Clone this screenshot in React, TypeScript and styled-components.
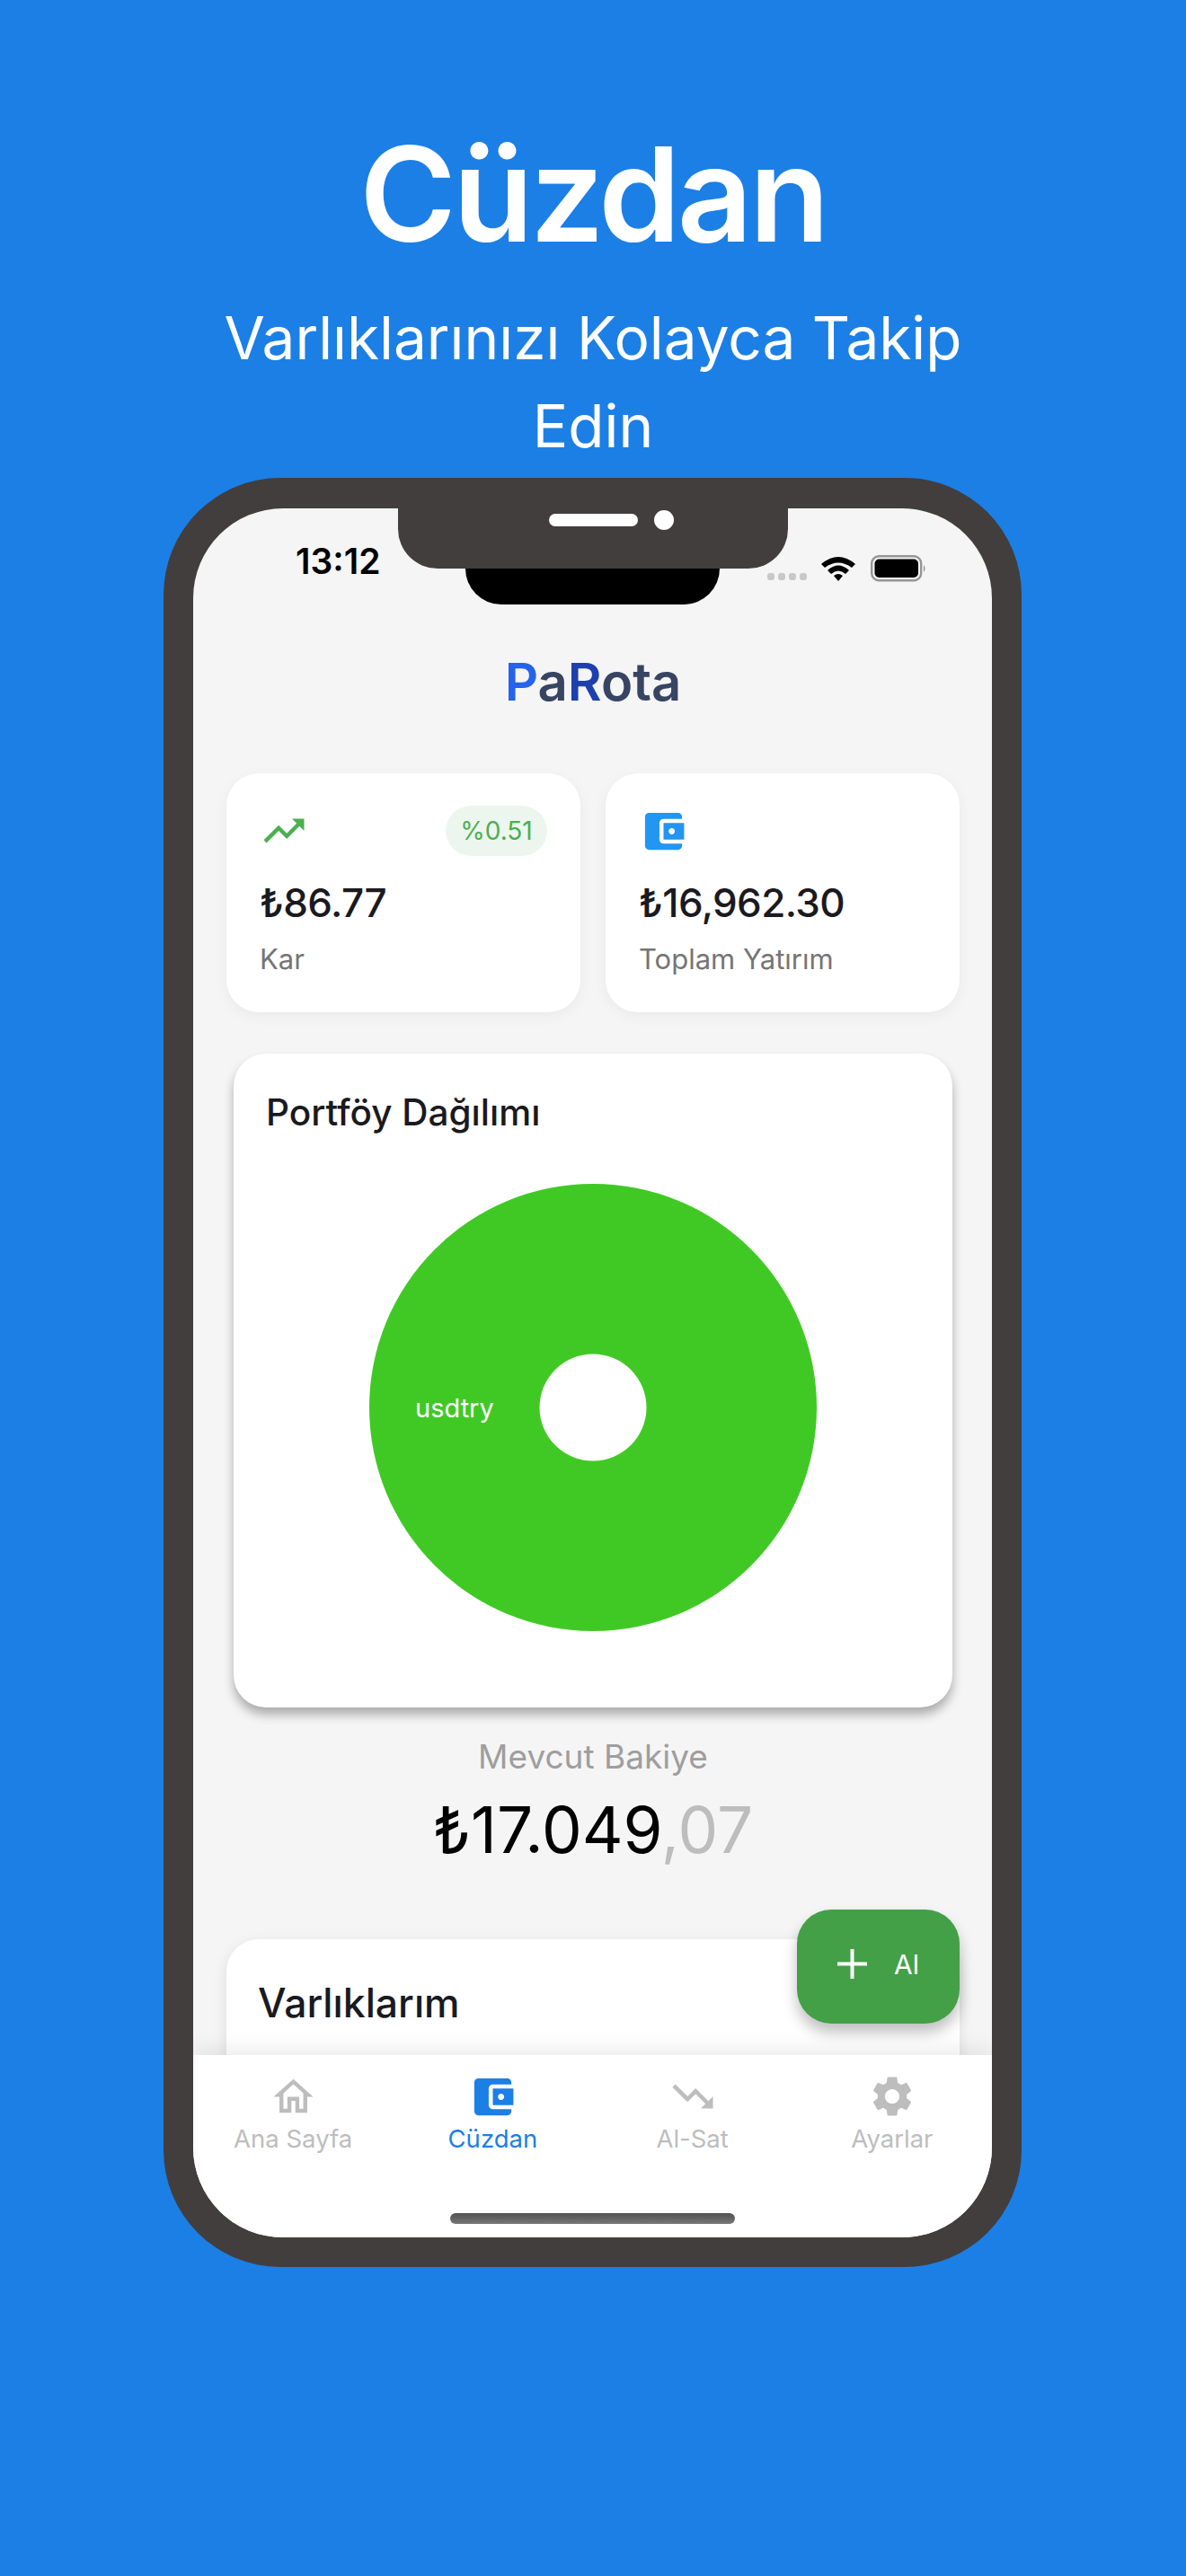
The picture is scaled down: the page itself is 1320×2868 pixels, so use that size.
import React from "react";
import styled, { createGlobalStyle } from "styled-components";
import {
  MdAccountBalanceWallet,
  MdOutlineHome,
  MdSettings,
  MdTrendingDown,
  MdTrendingUp,
} from "react-icons/md";

const GlobalStyle = createGlobalStyle`
  html, body {
    margin: 0;
    padding: 0;
    background: #1c7fe6;
  }
  * {
    box-sizing: border-box;
  }
`;

const Page = styled.div`
  width: 1320px;
  height: 2868px;
  overflow: hidden;
  background: #1c7fe6;
  color: #fff;
  font-family: Inter, "Noto Sans", sans-serif;
  display: flex;
  flex-direction: column;
  align-items: center;
  padding-top: 131px;
`;

const Headline = styled.h1`
  margin: 0;
  font-size: 146px;
  line-height: 170px;
  font-weight: 600;
  letter-spacing: -3.6px;
`;

const Tagline = styled.p`
  margin: 26px 0 0;
  width: 860px;
  text-align: center;
  font-size: 65.7px;
  line-height: 98px;
  font-weight: 400;
`;

const Phone = styled.div`
  position: relative;
  margin: 9px 1px 0 0;
  width: 955px;
  height: 1992px;
  padding: 34px 33px 33px;
  background: #423e3d;
  border-radius: 130px;
`;

const Screen = styled.div`
  height: 100%;
  background: #f5f5f5;
  border-radius: 100px;
  overflow: hidden;
  display: flex;
  flex-direction: column;
`;

const Notch = styled.div`
  position: absolute;
  left: 261px;
  top: 0;
  width: 434px;
  height: 101px;
  background: #423e3d;
  border-radius: 0 0 44px 44px;
  display: flex;
  justify-content: center;
  align-items: center;
  gap: 18px;
  padding: 0 0 8px 40px;
  z-index: 3;
`;

const NotchShade = styled.div`
  position: absolute;
  left: 336px;
  top: 90px;
  width: 283px;
  height: 51px;
  background: #000;
  border-radius: 0 0 40px 40px;
  z-index: 2;
`;

const Speaker = styled.span`
  width: 99px;
  height: 14px;
  border-radius: 7px;
  background: #fff;
`;

const Camera = styled.span`
  width: 22px;
  height: 22px;
  border-radius: 50%;
  background: #fff;
`;

const StatusBar = styled.div`
  height: 91px;
  flex: none;
  display: flex;
  align-items: flex-end;
  justify-content: space-between;
  padding: 0 73px 9px 114px;
`;

const Clock = styled.span`
  color: #000;
  font-size: 39px;
  line-height: 46px;
  font-weight: 600;
`;

const StatusIcons = styled.div`
  display: flex;
  align-items: center;
`;

const SignalDots = styled.div`
  display: flex;
  gap: 4px;
  margin: 17px 16px 0 0;
`;

const SignalDot = styled.span`
  width: 8px;
  height: 8px;
  border-radius: 3px;
  background: #c8c8c8;
`;

const Content = styled.div`
  flex: 1;
  min-height: 0;
  padding: 0 36px 0 37px;
`;

const Logo = styled.div`
  margin-top: 68px;
  text-align: center;
  font-size: 58px;
  line-height: 68px;
  font-weight: 600;
  color: #374462;
`;

const LogoLetter = styled.span<{ $color: string }>`
  color: ${(p) => p.$color};
`;

const StatGrid = styled.div`
  margin-top: 68px;
  display: grid;
  grid-template-columns: 394px 394px;
  column-gap: 28px;
`;

const StatCard = styled.div`
  height: 266px;
  padding: 36px 37px;
  background: #fff;
  border-radius: 36px;
  box-shadow: 0 4px 16px rgba(0, 0, 0, 0.05);
`;

const StatTop = styled.div`
  height: 56px;
  display: flex;
  align-items: center;
  justify-content: space-between;
`;

const Badge = styled.span`
  width: 113px;
  height: 56px;
  border-radius: 28px;
  background: #edf6ee;
  color: #4caf50;
  font-size: 28px;
  display: flex;
  align-items: center;
  justify-content: center;
`;

const StatValue = styled.div`
  margin-top: 24px;
  color: #1a1a1f;
  font-size: 44px;
  line-height: 56px;
  font-weight: 500;
  letter-spacing: -0.6px;
`;

const StatLabel = styled.div`
  margin-top: 16px;
  color: #757575;
  font-size: 31px;
  line-height: 38px;
`;

const PortfolioCard = styled.div`
  margin: 46px 8px 0 8px;
  height: 728px;
  padding: 41px 36px 0;
  background: #fff;
  border-radius: 36px;
  box-shadow: 0 8px 12px rgba(0, 0, 0, 0.3);
`;

const PortfolioTitle = styled.h2`
  margin: 0;
  color: #1a1a1f;
  font-size: 40.5px;
  line-height: 50px;
  font-weight: 500;
`;

const Chart = styled.div`
  margin-top: 54px;
  display: flex;
  justify-content: center;
`;

const Balance = styled.div`
  margin-top: 32px;
  text-align: center;
`;

const BalanceLabel = styled.div`
  color: #9e9e9e;
  font-size: 37px;
  line-height: 46px;
`;

const BalanceAmount = styled.div`
  margin-top: 15px;
  color: #000;
  font-size: 71px;
  line-height: 86px;
`;

const BalanceCents = styled.span`
  color: #bdbdbd;
`;

const AssetsCard = styled.div`
  margin-top: 79px;
  height: 240px;
  padding: 44px 35px;
  background: #fff;
  border-radius: 36px;
  box-shadow: 0 4px 16px rgba(0, 0, 0, 0.1);
`;

const AssetsTitle = styled.h2`
  margin: 0;
  color: #1a1a1f;
  font-size: 44.5px;
  line-height: 54px;
  font-weight: 500;
`;

const BuyButton = styled.div`
  position: absolute;
  left: 705px;
  top: 1594px;
  width: 181px;
  height: 127px;
  border-radius: 38px;
  background: #43a047;
  box-shadow: 0 10px 16px rgba(0, 0, 0, 0.25);
  display: flex;
  align-items: center;
  justify-content: center;
  gap: 30px;
  color: #fff;
  font-size: 30px;
  padding-bottom: 6px;
`;

const PlusMark = styled.svg`
  width: 33px;
  height: 33px;
`;

const TabBar = styled.nav`
  height: 203px;
  flex: none;
  position: relative;
  background: #fff;
  box-shadow: 0 -8px 20px rgba(0, 0, 0, 0.07);
  display: flex;
  flex-direction: column;
`;

const Tabs = styled.div`
  display: grid;
  grid-template-columns: repeat(4, 1fr);
  padding-top: 19px;
`;

const Tab = styled.div<{ $active?: boolean }>`
  display: flex;
  flex-direction: column;
  align-items: center;
  color: ${(p) => (p.$active ? "#1c7fe6" : "#bdbdbd")};
  font-size: 27.5px;
  line-height: 34px;
`;

const TabIcon = styled.span`
  height: 54px;
  display: flex;
  align-items: center;
  justify-content: center;
  margin-bottom: 3px;
`;

const HomeIndicator = styled.div`
  margin: 66px auto 0;
  width: 317px;
  height: 12px;
  border-radius: 6px;
  background: linear-gradient(#505050, #777);
`;

const WifiIcon = () => (
  <svg width="38" height="28" viewBox="0 0 38 28">
    <path d="M0 9 Q19 -7 38 9 L34 13 Q19 2 4 13Z" fill="#000" />
    <path d="M7 16 Q19 5 31 16 L27 20 Q19 13 11 20Z" fill="#000" />
    <path d="M14 22 Q19 18 24 22 L19 28Z" fill="#000" />
  </svg>
);

const BatteryIcon = () => (
  <svg width="62" height="30" viewBox="0 0 62 30" style={{ marginLeft: 17 }}>
    <rect x="1.2" y="1.2" width="55" height="27" rx="8" fill="none" stroke="#969696" strokeWidth="2.4" />
    <rect x="4.5" y="4.5" width="48.5" height="20.5" rx="5" fill="#000" />
    <path d="M59 11 Q62 15 59 19Z" fill="#8c8c8c" />
  </svg>
);

const PieChart = () => (
  <svg width="498" height="498" viewBox="0 0 498 498">
    <circle cx="249" cy="249" r="249" fill="#40c925" />
    <circle cx="249" cy="249" r="59.5" fill="#fff" />
    <text x="51" y="260" fill="#fff" fontFamily="Inter, sans-serif" fontSize="29">
      usdtry
    </text>
  </svg>
);

const TABS = [
  { label: "Ana Sayfa", icon: <MdOutlineHome size={53} /> },
  { label: "Cüzdan", icon: <MdAccountBalanceWallet size={55} />, active: true },
  { label: "Al-Sat", icon: <MdTrendingDown size={54} /> },
  { label: "Ayarlar", icon: <MdSettings size={54} /> },
];

const App = () => (
  <Page>
    <GlobalStyle />
    <Headline>Cüzdan</Headline>
    <Tagline>Varlıklarınızı Kolayca Takip Edin</Tagline>
    <Phone>
      <Notch>
        <Speaker />
        <Camera />
      </Notch>
      <NotchShade />
      <Screen>
        <StatusBar>
          <Clock>13:12</Clock>
          <StatusIcons>
            <SignalDots>
              <SignalDot />
              <SignalDot />
              <SignalDot />
              <SignalDot />
            </SignalDots>
            <WifiIcon />
            <BatteryIcon />
          </StatusIcons>
        </StatusBar>
        <Content>
          <Logo>
            <LogoLetter $color="#2563eb">P</LogoLetter>a
            <LogoLetter $color="#1e40af">R</LogoLetter>ota
          </Logo>
          <StatGrid>
            <StatCard>
              <StatTop>
                <MdTrendingUp size={54} color="#4caf50" />
                <Badge>%0.51</Badge>
              </StatTop>
              <StatValue>₺86.77</StatValue>
              <StatLabel>Kar</StatLabel>
            </StatCard>
            <StatCard>
              <StatTop>
                <MdAccountBalanceWallet size={55} color="#2196f3" />
              </StatTop>
              <StatValue>₺16,962.30</StatValue>
              <StatLabel>Toplam Yatırım</StatLabel>
            </StatCard>
          </StatGrid>
          <PortfolioCard>
            <PortfolioTitle>Portföy Dağılımı</PortfolioTitle>
            <Chart>
              <PieChart />
            </Chart>
          </PortfolioCard>
          <Balance>
            <BalanceLabel>Mevcut Bakiye</BalanceLabel>
            <BalanceAmount>
              ₺17.049<BalanceCents>,07</BalanceCents>
            </BalanceAmount>
          </Balance>
          <AssetsCard>
            <AssetsTitle>Varlıklarım</AssetsTitle>
          </AssetsCard>
        </Content>
        <TabBar>
          <Tabs>
            {TABS.map((tab) => (
              <Tab key={tab.label} $active={tab.active}>
                <TabIcon>{tab.icon}</TabIcon>
                {tab.label}
              </Tab>
            ))}
          </Tabs>
          <HomeIndicator />
        </TabBar>
      </Screen>
      <BuyButton>
        <PlusMark viewBox="0 0 33 33">
          <path d="M16.5 0v33M0 16.5h33" stroke="#fff" strokeWidth="4" />
        </PlusMark>
        Al
      </BuyButton>
    </Phone>
  </Page>
);

export default App;
